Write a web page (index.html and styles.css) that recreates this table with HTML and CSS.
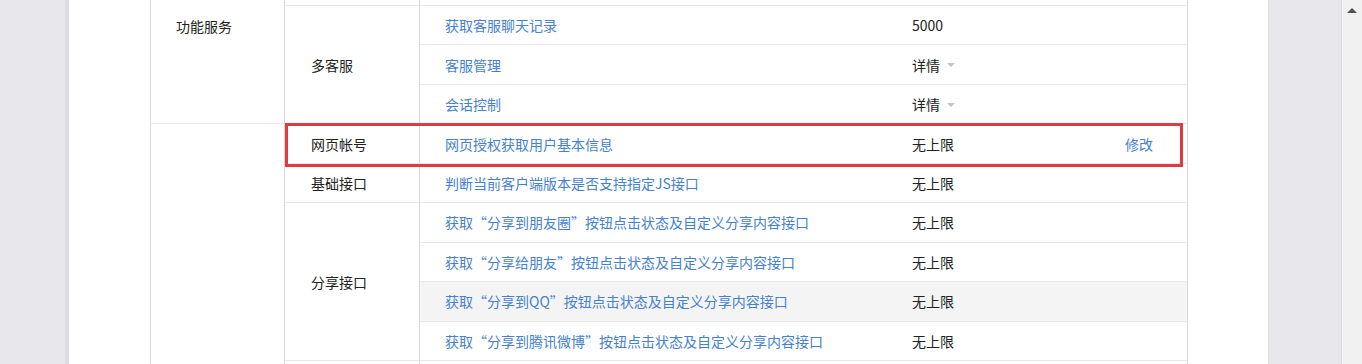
FILE: index.html
```html
<!DOCTYPE html>
<html lang="zh-CN">
<head>
<meta charset="utf-8">
<title>接口权限</title>
<link rel="stylesheet" href="styles.css">
</head>
<body>
<div class="page">
  <div class="panel">
    <table class="perm">
      <colgroup>
        <col class="c1"><col class="c2"><col class="c3"><col class="c4">
      </colgroup>
      <tbody>
        <tr class="stub">
          <td class="cat" rowspan="4"><span class="cat-label">功能服务</span></td>
          <td class="grp"></td>
          <td class="api"></td>
          <td class="val"></td>
        </tr>
        <tr>
          <td class="grp" rowspan="3">多客服</td>
          <td class="api"><a>获取客服聊天记录</a></td>
          <td class="val">5000</td>
        </tr>
        <tr>
          <td class="api"><a>客服管理</a></td>
          <td class="val"><span class="more">详情<i class="caret"></i></span></td>
        </tr>
        <tr>
          <td class="api"><a>会话控制</a></td>
          <td class="val"><span class="more">详情<i class="caret"></i></span></td>
        </tr>
        <tr>
          <td class="cat cat-top" rowspan="7"></td>
          <td class="grp hl-host">网页帐号<div class="highlight"></div></td>
          <td class="api"><a>网页授权获取用户基本信息</a></td>
          <td class="val"><div class="val-row"><span>无上限</span><a class="edit">修改</a></div></td>
        </tr>
        <tr>
          <td class="grp">基础接口</td>
          <td class="api"><a>判断当前客户端版本是否支持指定JS接口</a></td>
          <td class="val">无上限</td>
        </tr>
        <tr>
          <td class="grp" rowspan="4">分享接口</td>
          <td class="api"><a>获取“分享到朋友圈”按钮点击状态及自定义分享内容接口</a></td>
          <td class="val">无上限</td>
        </tr>
        <tr>
          <td class="api"><a>获取“分享给朋友”按钮点击状态及自定义分享内容接口</a></td>
          <td class="val">无上限</td>
        </tr>
        <tr class="hover">
          <td class="api"><a>获取“分享到QQ”按钮点击状态及自定义分享内容接口</a></td>
          <td class="val">无上限</td>
        </tr>
        <tr>
          <td class="api"><a>获取“分享到腾讯微博”按钮点击状态及自定义分享内容接口</a></td>
          <td class="val">无上限</td>
        </tr>
        <tr>
          <td class="grp"></td>
          <td class="api"></td>
          <td class="val"></td>
        </tr>
      </tbody>
    </table>
  </div>
</div>
<div class="scrollbar">
  <div class="scroll-up"></div>
</div>
</body>
</html>
```

FILE: styles.css
```css
html, body {
  margin: 0;
  padding: 0;
}
body {
  display: flex;
  height: 364px;
  overflow: hidden;
  font-family: "Noto Sans CJK SC", "Microsoft YaHei", sans-serif;
  font-size: 14px;
  color: #222;
  background: #e8e8ec;
}
.page {
  flex: 1;
  display: flex;
  align-items: flex-start;
  padding-left: 65px;
  padding-right: 72px;
  background: #e8e8ec;
  min-width: 0;
}
.panel {
  flex: 1;
  background: #fff;
  border-left: 4px solid #dcdde1;
  border-right: 1px solid #dcdde1;
  padding: 0 80px 0 81px;
  height: 364px;
  overflow: hidden;
}
.perm {
  width: 1038px;
  table-layout: fixed;
  border-collapse: separate;
  border-spacing: 0;
}
.c1 { width: 135px; }
.c2 { width: 135px; }
.c3 { width: 467px; }
.c4 { width: 301px; }
.perm td {
  box-sizing: border-box;
  padding: 0 0 0 25px;
  height: 39.44px;
  line-height: 20px;
  vertical-align: middle;
  border-top: 1px solid #e7e8eb;
  white-space: nowrap;
}
.perm tr.stub td {
  height: 5px;
  border-top: 0;
}
.perm td.cat {
  border-left: 1px solid #d9d9dc;
  border-right: 1px solid #d9d9dc;
  vertical-align: top;
  border-top: 0;
}
.perm td.cat-top {
  border-top: 1px solid #e7e8eb;
}
.cat-label {
  display: block;
  padding-top: 16px;
}
.perm td.grp {
  border-right: 1px solid #d9d9dc;
  padding-left: 26px;
}
.perm td.val {
  border-right: 1px solid #d9d9dc;
}
.api a {
  color: #4581d0;
  text-decoration: none;
}
.hover td.api,
.hover td.val {
  background: #f4f4f5;
}
.more {
  display: inline-flex;
  align-items: center;
}
.caret {
  display: inline-block;
  width: 0;
  height: 0;
  margin-left: 7px;
  margin-top: 1px;
  border-left: 4px solid transparent;
  border-right: 4px solid transparent;
  border-top: 4px solid #c4c4c4;
}
.val-row {
  display: flex;
  align-items: center;
  padding-right: 34px;
}
.edit {
  margin-left: auto;
  color: #4581d0;
}
.hl-host {
  position: relative;
}
.highlight {
  position: absolute;
  left: 0;
  top: -1px;
  width: 898px;
  height: 44px;
  box-sizing: border-box;
  border: 3px solid #e53a3d;
  pointer-events: none;
}
.scrollbar {
  width: 21px;
  flex: none;
  box-sizing: border-box;
  border-left: 1px solid #d8d8dc;
  background: #f0f0f0;
  box-shadow: inset 1px 0 0 #fafafa;
}
.scroll-up {
  width: 0;
  height: 0;
  margin: 8px auto 0;
  border-left: 5px solid transparent;
  border-right: 5px solid transparent;
  border-bottom: 5px solid #505050;
}
```
